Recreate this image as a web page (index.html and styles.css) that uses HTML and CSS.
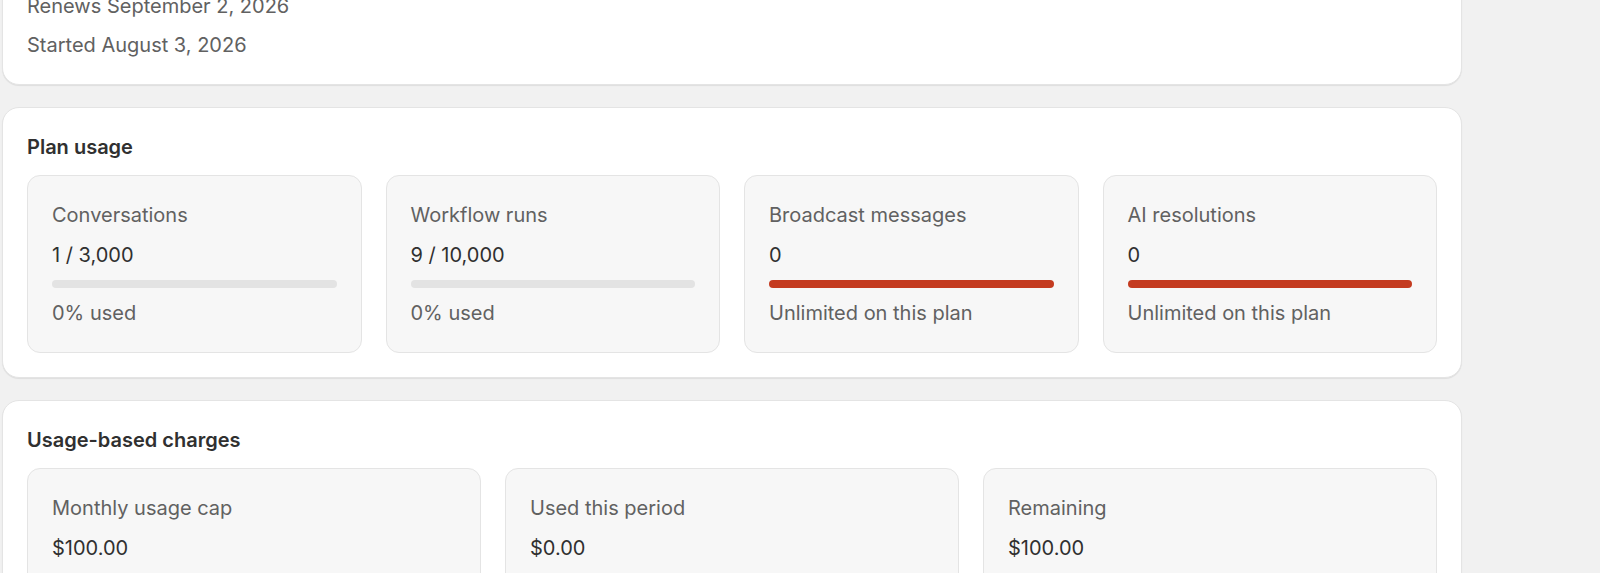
FILE: index.html
```html
<!DOCTYPE html>
<html lang="en">
<head>
<meta charset="utf-8">
<title>Billing</title>
<link rel="stylesheet" href="styles.css">
</head>
<body>
<main class="page">
  <section class="card card-top">
    <p class="meta">Renews September 2, 2026</p>
    <p class="meta">Started August 3, 2026</p>
  </section>

  <section class="card">
    <h2 class="card-title">Plan usage</h2>
    <div class="grid grid-4">
      <div class="tile">
        <div class="tile-label">Conversations</div>
        <div class="tile-value">1 / 3,000</div>
        <div class="bar"><div class="bar-fill" style="width:0%"></div></div>
        <div class="tile-label">0% used</div>
      </div>
      <div class="tile">
        <div class="tile-label">Workflow runs</div>
        <div class="tile-value">9 / 10,000</div>
        <div class="bar"><div class="bar-fill" style="width:0%"></div></div>
        <div class="tile-label">0% used</div>
      </div>
      <div class="tile">
        <div class="tile-label">Broadcast messages</div>
        <div class="tile-value">0</div>
        <div class="bar bar-unlimited"></div>
        <div class="tile-label">Unlimited on this plan</div>
      </div>
      <div class="tile">
        <div class="tile-label">AI resolutions</div>
        <div class="tile-value">0</div>
        <div class="bar bar-unlimited"></div>
        <div class="tile-label">Unlimited on this plan</div>
      </div>
    </div>
  </section>

  <section class="card">
    <h2 class="card-title">Usage-based charges</h2>
    <div class="grid grid-3">
      <div class="tile">
        <div class="tile-label">Monthly usage cap</div>
        <div class="tile-value">$100.00</div>
        <div class="tile-label">&nbsp;</div>
      </div>
      <div class="tile">
        <div class="tile-label">Used this period</div>
        <div class="tile-value">$0.00</div>
        <div class="tile-label">&nbsp;</div>
      </div>
      <div class="tile">
        <div class="tile-label">Remaining</div>
        <div class="tile-value">$100.00</div>
        <div class="tile-label">&nbsp;</div>
      </div>
    </div>
  </section>
</main>
</body>
</html>
```

FILE: styles.css
```css
* { box-sizing: border-box; }

html, body {
  margin: 0;
  padding: 0;
  background: #f1f1f1;
  height: 573px;
  overflow: hidden;
}

body {
  font-family: Inter, "Noto Sans", "Liberation Sans", sans-serif;
  color: #303030;
  font-size: 20px;
  line-height: 30px;
}

.page {
  width: 1460px;
  margin: -34px 0 0 2px;
  display: flex;
  flex-direction: column;
  gap: 22px;
}

.card {
  background: #ffffff;
  border: 1px solid #e4e4e4;
  border-radius: 17px;
  padding: 24px;
  box-shadow: 0 1px 1px rgba(0, 0, 0, 0.08);
  display: flex;
  flex-direction: column;
  gap: 13px;
}

.card-top {
  gap: 9px;
}

.meta {
  margin: 0;
  color: #616161;
}

.card-title {
  margin: 0;
  font-size: 20px;
  font-weight: 600;
  line-height: 30px;
  color: #303030;
}

.grid {
  display: grid;
  gap: 24px;
}

.grid-4 { grid-template-columns: repeat(4, 1fr); }
.grid-3 { grid-template-columns: repeat(3, 1fr); }

.tile {
  background: #f7f7f7;
  border: 1px solid #e4e4e4;
  border-radius: 13px;
  padding: 24px;
  display: flex;
  flex-direction: column;
  gap: 10px;
}

.tile-label {
  color: #616161;
}

.tile-value {
  color: #303030;
}

.bar {
  height: 8px;
  border-radius: 4px;
  background: #e3e3e3;
  overflow: hidden;
}

.bar-fill {
  height: 100%;
  background: #c43b20;
}

.bar-unlimited {
  background: #c43b20;
}
```
